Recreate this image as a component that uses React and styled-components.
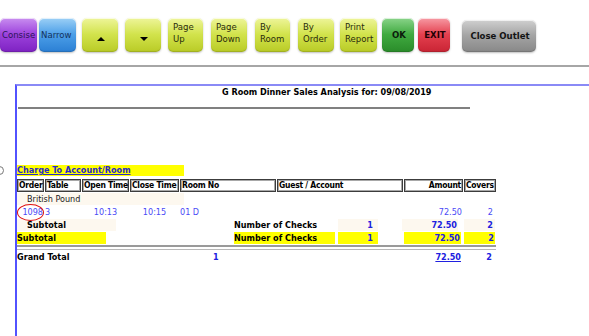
import React from 'react'
import styled, { createGlobalStyle } from 'styled-components'

const GlobalStyle = createGlobalStyle`
  html, body { margin: 0; padding: 0; background: #fff; }
  body {
    width: 589px;
    height: 336px;
    overflow: hidden;
    font-family: "DejaVu Sans Condensed", "DejaVu Sans", sans-serif;
  }
`

const tones = {
  purple: { top: '#c98ef0', mid: '#9c42dc', bot: '#7e22c2', ink: '#2c1656' },
  blue: { top: '#9cd0f6', mid: '#4c9fe8', bot: '#2b7fd4', ink: '#14325c' },
  lime: { top: '#eef59a', mid: '#d2e34c', bot: '#b9cb26', ink: '#2a2c0c' },
  green: { top: '#8ad48a', mid: '#40aa40', bot: '#2a8c2a', ink: '#0c1c0c' },
  red: { top: '#f79aa4', mid: '#e4404f', bot: '#c92434', ink: '#1e0004' },
  gray: { top: '#d0d0d0', mid: '#a4a4a4', bot: '#888', ink: '#141414' },
}

const Toolbar = styled.div`
  display: flex;
  align-items: flex-start;
  padding-top: 18px;
  height: 47px;
`

const Btn = styled.button`
  all: unset;
  box-sizing: border-box;
  width: ${p => p.$w}px;
  height: ${p => p.$h || 34}px;
  margin-left: ${p => p.$ml || 0}px;
  margin-top: ${p => (p.$h ? 34 - p.$h : 0)}px;
  border-radius: 5px;
  background: linear-gradient(to bottom, ${p => tones[p.$tone].top} 0%, ${p => tones[p.$tone].mid} 48%, ${p => tones[p.$tone].bot} 100%);
  box-shadow: inset 0 1px 0 rgba(255,255,255,0.7), inset 0 -1px 1px rgba(0,0,0,0.15), 0 1px 2px rgba(0,0,0,0.25);
  color: ${p => tones[p.$tone].ink};
  font-size: 9.5px;
  line-height: 12px;
  font-weight: ${p => (p.$bold ? 700 : 400)};
  display: flex;
  flex-direction: column;
  justify-content: ${p => (p.$top ? 'flex-start' : 'center')};
  align-items: ${p => (p.$center ? 'center' : 'flex-start')};
  padding: ${p => (p.$top ? '3px 0 0 5px' : '0 0 0 2px')};
  white-space: nowrap;
`

const Arrow = styled.span`
  width: 0;
  height: 0;
  margin-top: 8px;
  border-left: 4px solid transparent;
  border-right: 4px solid transparent;
  ${p => (p.$down ? 'border-top: 4px solid #000;' : 'border-bottom: 4px solid #000;')}
`

const Rule = styled.div`
  height: 2px;
  background: #a6a6a6;
`

const Panel = styled.section`
  margin: 17px 0 0 15px;
  height: 252px;
  border-top: 2px solid #8a8af6;
  border-left: 2px solid #5252ff;
  font-size: 9px;
  line-height: 12px;
  color: #000;
`

const Title = styled.div`
  font-weight: 700;
  padding: 0 0 0 205px;
  height: 13px;
  line-height: 13px;
`

const TitleRule = styled.div`
  width: 452px;
  height: 2px;
  margin: 8px 0 0 1px;
  background: #808080;
`

const Charge = styled.div`
  position: relative;
  margin-top: 56px;
  width: 167px;
  height: 11px;
  line-height: 11px;
  background: #ffff00;
  color: #2a2ac8;
  font-weight: 700;
  text-decoration: underline;
`

const Radio = styled.span`
  position: absolute;
  left: -22px;
  top: 1px;
  width: 7px;
  height: 7px;
  border: 1px solid #777;
  border-radius: 50%;
`

const Head = styled.div`
  display: grid;
  grid-template-columns: 27px 36px 47px 49px 96px 126px 59px 32px;
  column-gap: 1px;
  margin-top: 3px;
  height: 13px;
`

const HeadCell = styled.div`
  box-sizing: border-box;
  border: 1px solid #3c3c3c;
  box-shadow: inset 0 0 0 1px #a8a8a8;
  font-weight: 700;
  font-size: 8.5px;
  letter-spacing: -0.25px;
  line-height: 11px;
  padding: 0 1px;
  text-align: ${p => p.$align || 'left'};
  white-space: nowrap;
  overflow: hidden;
`

const Note = styled.div`
  width: 157px;
  padding-left: 10px;
  margin-top: 1px;
  height: 12px;
  background: #fdf8ef;
  color: #222;
`

const Data = styled.div`
  display: grid;
  grid-template-columns: 27px 36px 47px 49px 96px 126px 59px 32px;
  column-gap: 1px;
  height: 12px;
  margin-top: 1px;
  color: #4a4af6;
`

const Val = styled.div`
  text-align: ${p => p.$align || 'left'};
  padding: ${p => p.$pad || '0'};
  white-space: nowrap;
`

const Ringed = styled.span`
  position: relative;
  &::after {
    content: '';
    position: absolute;
    left: -5px;
    top: -3px;
    width: 25px;
    height: 15px;
    border: 1.5px solid #e01010;
    border-radius: 50%;
  }
`

const Line = styled.div`
  display: flex;
  height: 12px;
  margin-top: ${p => p.$mt || 0}px;
`

const Cell = styled.div`
  box-sizing: border-box;
  width: ${p => p.$w}px;
  margin-left: ${p => p.$ml || 0}px;
  padding: ${p => p.$pad || '0'};
  background: ${p => p.$bg || 'transparent'};
  color: ${p => p.$ink || '#000'};
  font-weight: 700;
  text-align: ${p => p.$align || 'left'};
  text-decoration: ${p => (p.$link ? 'underline' : 'none')};
  white-space: nowrap;
`

const DoubleRule = styled.div`
  width: 479px;
  height: 2px;
  margin-top: 1px;
  border-top: 2px solid #9a9a9a;
  border-bottom: 1px solid #b8b8b8;
`

const beige = '#fdf8ef'
const yellow = '#ffff00'
const ink = '#2020e0'

const buttons = [
  { label: ['Consise'], tone: 'purple', w: 37 },
  { label: ['Narrow'], tone: 'blue', w: 37, ml: 2 },
  { arrow: 'up', tone: 'lime', w: 36, ml: 6 },
  { arrow: 'down', tone: 'lime', w: 36, ml: 7 },
  { label: ['Page', 'Up'], tone: 'lime', w: 35, ml: 7, top: true },
  { label: ['Page', 'Down'], tone: 'lime', w: 36, ml: 8, top: true },
  { label: ['By', 'Room'], tone: 'lime', w: 35, ml: 8, top: true },
  { label: ['By', 'Order'], tone: 'lime', w: 36, ml: 8, top: true },
  { label: ['Print', 'Report'], tone: 'lime', w: 37, ml: 6, top: true },
  { label: ['OK'], tone: 'green', w: 32, ml: 5, bold: true, center: true },
  { label: ['EXIT'], tone: 'red', w: 32, ml: 4, bold: true, center: true },
  { label: ['Close Outlet'], tone: 'gray', w: 74, ml: 12, h: 32, bold: true, center: true },
]

export default function App() {
  return (
    <>
      <GlobalStyle />
      <Toolbar>
        {buttons.map((b, i) => (
          <Btn key={i} $tone={b.tone} $w={b.w} $ml={b.ml} $h={b.h} $top={b.top} $bold={b.bold} $center={b.center || b.arrow}>
            {b.arrow ? <Arrow $down={b.arrow === 'down'} /> : b.label.map(l => <span key={l}>{l}</span>)}
          </Btn>
        ))}
      </Toolbar>
      <Rule />
      <Panel>
        <Title>G Room Dinner Sales Analysis for: 09/08/2019</Title>
        <TitleRule />
        <Charge>
          <Radio />
          Charge To Account/Room
        </Charge>
        <Head>
          <HeadCell>Order</HeadCell>
          <HeadCell>Table</HeadCell>
          <HeadCell>Open Time</HeadCell>
          <HeadCell>Close Time</HeadCell>
          <HeadCell>Room No</HeadCell>
          <HeadCell>Guest / Account</HeadCell>
          <HeadCell $align="right">Amount</HeadCell>
          <HeadCell>Covers</HeadCell>
        </Head>
        <Note>British Pound</Note>
        <Data>
          <Val $align="right" $pad="0 1px 0 0"><Ringed>1098</Ringed></Val>
          <Val>3</Val>
          <Val $align="center">10:13</Val>
          <Val $align="center">10:15</Val>
          <Val>01 D</Val>
          <Val />
          <Val $align="right" $pad="0 1px 0 0">72.50</Val>
          <Val $align="right" $pad="0 3px 0 0">2</Val>
        </Data>
        <Line $mt={1}>
          <Cell $w={99} $pad="0 0 0 10px" $bg={beige}>Subtotal</Cell>
          <Cell $w={100} $ml={118}>Number of Checks</Cell>
          <Cell $w={40} $ml={4} $bg={beige} $ink={ink} $align="right" $pad="0 5px 0 0">1</Cell>
          <Cell $w={56} $ml={24} $bg={beige} $ink={ink} $align="right" $pad="0 1px 0 0">72.50</Cell>
          <Cell $w={31} $ml={6} $bg={beige} $ink={ink} $align="right" $pad="0 2px 0 0">2</Cell>
        </Line>
        <Line $mt={1}>
          <Cell $w={89} $bg={yellow}>Subtotal</Cell>
          <Cell $w={101} $ml={128} $bg={yellow}>Number of Checks</Cell>
          <Cell $w={40} $ml={3} $bg={yellow} $ink={ink} $align="right" $pad="0 5px 0 0">1</Cell>
          <Cell $w={57} $ml={26} $bg={yellow} $ink={ink} $align="right" $pad="0 1px 0 0">72.50</Cell>
          <Cell $w={31} $ml={3} $bg={yellow} $ink={ink} $align="right" $pad="0 1px 0 0">2</Cell>
        </Line>
        <DoubleRule />
        <Line $mt={1}>
          <Cell $w={196}>Grand Total</Cell>
          <Cell $w={10} $ink={ink}>1</Cell>
          <Cell $w={42} $ml={196} $ink={ink} $align="right" $link>72.50</Cell>
          <Cell $w={33} $ink={ink} $align="right" $pad="0 2px 0 0">2</Cell>
        </Line>
      </Panel>
    </>
  )
}
